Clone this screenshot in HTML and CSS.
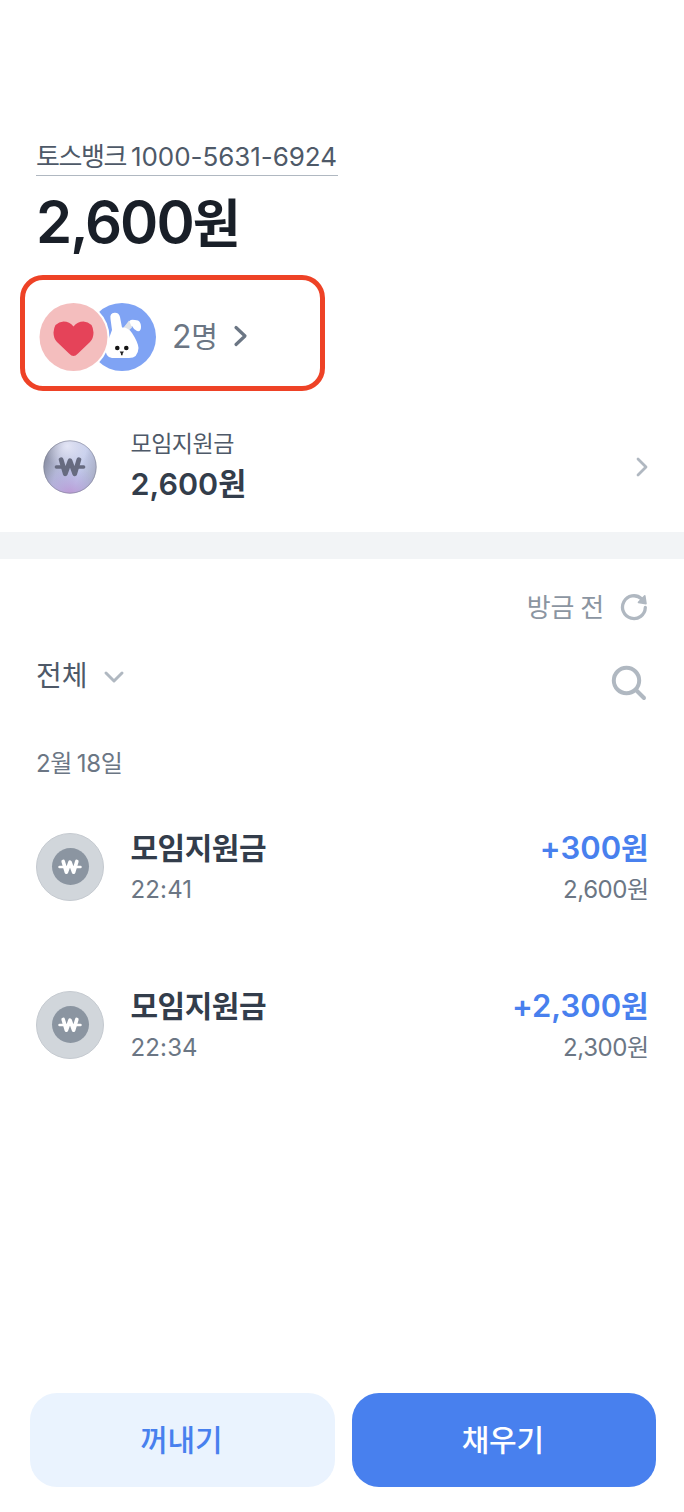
FILE: index.html
```html
<!DOCTYPE html>
<html lang="ko">
<head>
<meta charset="utf-8">
<title>모임통장</title>
<link rel="stylesheet" href="styles.css">
</head>
<body>
<svg width="0" height="0" class="defs">
  <symbol id="won" viewBox="0 0 30 22"><path d="M2 11H7M23 11H28" fill="none" stroke="currentColor" stroke-width="3.400" stroke-linecap="round"/><path d="M6.500 4l4 13.500 4.500-12.500 4.500 12.500 4-13.500" fill="none" stroke="currentColor" stroke-width="4.600" stroke-linecap="round" stroke-linejoin="round"/></symbol>
</svg>
<main class="screen">
  <header class="summary">
    <div class="account"><span class="ko">토스뱅크</span> 1000-5631-6924</div>
    <h1 class="balance">2,600<span class="balance-unit">원</span></h1>
  </header>
  <section class="members">
    <svg class="avatars" width="118" height="72" viewBox="38 301 118 72">
      <circle cx="122" cy="337" r="34" fill="#7fa3f4"/>
      <path d="M123.500 328L129.500 321Q131 319 135 320L138 320.500Q141 322 141 327Q141 332 137 331Q134 330 132 326L127 332Z" fill="#fff"/>
      <path d="M123 328.500L129 320.500 132 327.500 127 332Z" fill="#dfe2e8"/>
      <path d="M112 330L110.500 319Q109.500 313 114.500 312.800Q119 312.500 120 317L122 327.500Q128 327 132 333Q138 342 138.500 348Q138 358 129 358H112Q105 357 105.500 348Z" fill="#fff"/>
      <circle cx="117.300" cy="348" r="2.300" fill="#151515"/><circle cx="126.300" cy="348" r="2.300" fill="#151515"/>
      <path d="M119.700 351.500h4.200l-1.300 2.200v1.500h-1.600v-1.500z" fill="#222"/>
      <circle cx="73.500" cy="337" r="36" fill="#fff"/>
      <circle cx="73.500" cy="337" r="34" fill="#f4bebe"/>
      <path d="M73.500 356Q71.500 356 69 353.500L57 342Q53.500 338.500 53.500 332.500Q54 322 63.500 321.500Q69.500 321.500 73.500 326.500Q77.500 321.500 83.500 321.500Q93 322 93.500 332.500Q93.500 338.500 90 342L78 353.500Q75.500 356 73.500 356Z" fill="#e54359"/>
    </svg>
    <span class="count">2<span class="count-unit">명</span></span>
    <svg class="members-arrow" width="16" height="24" viewBox="0 0 16 24"><path d="M3 3.500l9 8.500-9 8.500" fill="none" stroke="#6b7684" stroke-width="3.200" stroke-linecap="round" stroke-linejoin="round"/></svg>
  </section>
  <section class="fund">
    <svg class="coin" width="54" height="54" viewBox="0 0 54 54">
      <defs>
        <linearGradient id="g1" x1="0" y1="0.300" x2="1" y2="0.600"><stop offset="0" stop-color="#858a9e"/><stop offset=".3" stop-color="#b4b9d6"/><stop offset=".7" stop-color="#c5cdeb"/><stop offset="1" stop-color="#a9aec6"/></linearGradient>
        <radialGradient id="g2" cx=".5" cy="1.050" r=".6"><stop offset="0" stop-color="#bd92d0" stop-opacity=".95"/><stop offset="1" stop-color="#aaa5e6" stop-opacity="0"/></radialGradient>
        <radialGradient id="g3" cx=".45" cy=".1" r=".45"><stop offset="0" stop-color="#f2f3ff" stop-opacity=".75"/><stop offset="1" stop-color="#f2f3ff" stop-opacity="0"/></radialGradient>
      </defs>
      <circle cx="27" cy="27" r="26.500" fill="url(#g1)"/><circle cx="27" cy="27" r="26.500" fill="url(#g2)"/><circle cx="27" cy="27" r="26.200" fill="url(#g3)" stroke="#7a7c8c" stroke-opacity=".65" stroke-width=".8"/>
      <use href="#won" x="11" y="15.500" width="32" height="23" color="#676b80"/>
    </svg>
    <div class="fund-text"><div class="fund-name">모임지원금</div><div class="fund-value">2,600<span class="ko">원</span></div></div>
    <svg width="14" height="22" viewBox="0 0 14 22"><path d="M3 3l8 8-8 8" fill="none" stroke="#b0b8c1" stroke-width="2.800" stroke-linecap="round" stroke-linejoin="round"/></svg>
  </section>
  <div class="divider"></div>
  <section class="history">
    <div class="refresh"><span class="refresh-time">방금 전</span>
      <svg width="28" height="28" viewBox="0 0 28 28"><path d="M21.500 5.700A11.400 11.400 0 1 0 25.300 14.500" fill="none" stroke="#b0b8c1" stroke-width="3.300" stroke-linecap="round"/><path d="M24.800 2.800l1.200 7.900-7.500-1.300z" fill="#b0b8c1" stroke="#b0b8c1" stroke-width="1.600" stroke-linejoin="round"/></svg>
    </div>
    <div class="filter"><span class="filter-name">전체</span>
      <svg width="22" height="16" viewBox="0 0 22 16"><path d="M3 4l8 8 8-8" fill="none" stroke="#b0b8c1" stroke-width="3" stroke-linecap="round" stroke-linejoin="round"/></svg>
      <svg class="search" width="36" height="36" viewBox="0 0 36 36"><circle cx="15.500" cy="15.500" r="12.700" fill="none" stroke="#b0b8c1" stroke-width="4"/><path d="M25 25l8 8" stroke="#b0b8c1" stroke-width="4" stroke-linecap="round"/></svg>
    </div>
    <div class="date">2<span class="ko">월</span> 18<span class="ko">일</span></div>
    <div class="entry">
      <div class="badge"><div class="disc"><svg width="24" height="18"><use href="#won" width="24" height="18"/></svg></div></div>
      <div class="entry-main"><div class="entry-name">모임지원금</div><div class="entry-sub">22:41</div></div>
      <div class="entry-side"><div class="entry-value">+300<span class="value-unit">원</span></div><div class="entry-sub after">2,600<span class="ko">원</span></div></div>
    </div>
    <div class="entry">
      <div class="badge"><div class="disc"><svg width="24" height="18"><use href="#won" width="24" height="18"/></svg></div></div>
      <div class="entry-main"><div class="entry-name">모임지원금</div><div class="entry-sub">22:34</div></div>
      <div class="entry-side"><div class="entry-value">+2,300<span class="value-unit">원</span></div><div class="entry-sub after">2,300<span class="ko">원</span></div></div>
    </div>
  </section>
  <footer class="actions">
    <button class="btn btn-light">꺼내기</button>
    <button class="btn btn-fill">채우기</button>
  </footer>
</main>
</body>
</html>
```
FILE: styles.css
```css
* { box-sizing: border-box; }
body { margin: 0; background: #fff; font-family: Inter, "Noto Sans CJK KR", sans-serif; }
svg { display: block; flex: none; }
.defs { position: absolute; }
.ko { letter-spacing: -0.05em; }
.screen { width: 684px; height: 1512px; display: flex; flex-direction: column; overflow: hidden; }
.summary { padding: 138px 36px 0; height: 275px; }
.account { width: 302px; height: 38px; line-height: 38px; font-size: 26px; color: #4e5968; border-bottom: 1px solid #b0b8c1; white-space: nowrap; letter-spacing: -0.05px; word-spacing: -2.4px; }
.account .ko { letter-spacing: -1.4px; }
.balance { margin: 6px 0 0; font-size: 58px; font-weight: 600; line-height: 80px; color: #191f28; letter-spacing: -2px; }
.balance-unit { font-size: 52px; letter-spacing: 0; }
.members { margin-left: 20px; width: 305px; height: 116px; border: 5px solid #ee4226; border-radius: 23px; display: flex; align-items: center; padding: 8px 0 0 13px; }
.count { margin-left: 16px; font-size: 32px; line-height: 40px; color: #6b7684; width: 48px; white-space: nowrap; letter-spacing: -0.2px; }
.count-unit { font-size: 29px; }
.members-arrow { margin: 0 0 2px 13px; }
.fund { height: 141px; padding: 10px 35px 0 43px; display: flex; align-items: center; }
.fund-text { flex: 1; margin: -2px 0 0 33.5px; }
.fund-name { font-size: 23px; line-height: 36px; color: #4e5968; letter-spacing: -0.5px; }
.fund-value { font-size: 30.5px; line-height: 44px; font-weight: 600; color: #333d4b; }
.divider { height: 27px; background: #f2f4f6; flex: none; }
.history { padding: 28px 36px 0; flex: 1; }
.refresh { display: flex; justify-content: flex-end; align-items: center; gap: 16px; height: 40px; font-size: 26px; color: #8b95a1; }
.refresh-time { letter-spacing: -0.2px; word-spacing: -1px; margin-top: -4px; }
.filter { display: flex; align-items: center; height: 56px; margin-top: 22px; }
.filter-name { font-size: 28px; color: #4e5968; width: 67px; margin-top: -6px; }
.search { margin: 11px 1px 0 auto; }
.date { margin-top: 41px; height: 36px; line-height: 36px; font-size: 24px; color: #6b7684; letter-spacing: -0.3px; word-spacing: -1px; }
.entry { display: flex; align-items: center; height: 90px; margin: 40px 0 68px; }
.entry + .entry { margin-top: 0; }
.badge { width: 68px; height: 68px; margin-top: -1px; border-radius: 50%; background: #d1d6db; border: 1px solid #c5cad0; display: flex; align-items: center; justify-content: center; }
.disc { width: 37px; height: 37px; border-radius: 50%; background: #8b95a1; color: #fff; display: flex; align-items: center; justify-content: center; }
.entry-main { flex: 1; margin-left: 26.5px; }
.entry-side { text-align: right; }
.entry-name { font-size: 30px; line-height: 44px; font-weight: 600; color: #333d4b; letter-spacing: -0.5px; }
.entry-value { font-size: 31px; line-height: 44px; font-weight: 600; color: #4880ee; }
.value-unit { font-size: 30px; letter-spacing: -0.7px; }
.entry-sub { font-size: 24px; line-height: 40px; color: #6b7684; letter-spacing: 0.15px; margin-bottom: -2px; }
.entry-sub.after { letter-spacing: -0.4px; }
.actions { display: flex; gap: 17px; height: 119px; padding: 0 28px 25px 30px; }
.btn { flex: 1; border: 0; border-radius: 27px; font-family: inherit; font-size: 30px; font-weight: 500; padding: 0 2px 4px 0; letter-spacing: -0.3px; }
.btn-light { background: #eaf3fe; color: #4880ee; }
.btn-fill { background: #4880ee; color: #fff; }
```
